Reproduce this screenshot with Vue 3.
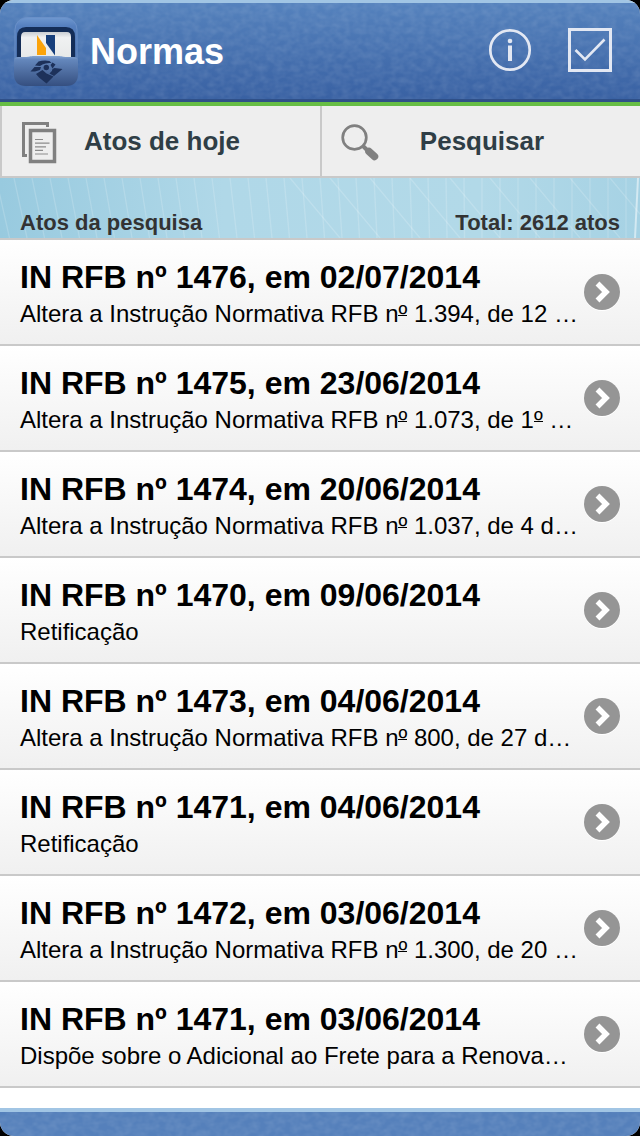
<template>
  <div class="screen">
    <div class="app">
      <header class="header">
        <svg class="texture" width="640" height="96" aria-hidden="true">
          <filter id="leather-top" x="0" y="0" width="100%" height="100%">
            <feTurbulence type="fractalNoise" baseFrequency="0.12 0.16" numOctaves="2" seed="4" />
            <feColorMatrix values="0 0 0 0 1  0 0 0 0 1  0 0 0 0 1  1 0 0 0 -0.3" />
          </filter>
          <rect width="640" height="96" filter="url(#leather-top)" />
        </svg>
        <svg class="logo" width="66" height="72" viewBox="0 0 66 72">
          <defs>
            <linearGradient id="box" x1="0" y1="0" x2="0" y2="1">
              <stop offset="0" stop-color="#6f98d0" />
              <stop offset="0.14" stop-color="#5680bf" />
              <stop offset="1" stop-color="#3f649f" />
            </linearGradient>
            <linearGradient id="front" x1="0" y1="0" x2="0" y2="1">
              <stop offset="0" stop-color="#84a4d2" />
              <stop offset="0.12" stop-color="#6487bc" />
              <stop offset="1" stop-color="#354f80" />
            </linearGradient>
            <linearGradient id="paper" x1="0" y1="0" x2="0" y2="1">
              <stop offset="0" stop-color="#c9cdd2" />
              <stop offset="0.2" stop-color="#f0f1f2" />
              <stop offset="1" stop-color="#e6e8e8" />
            </linearGradient>
          </defs>
          <rect x="2" y="1.500" width="62" height="60" rx="12" fill="url(#box)" stroke="#6a90c8" />
          <path d="M4 44V21Q4 11 13 11H53Q62 11 62 21V44Z" fill="#142d57" />
          <path d="M8 44V21Q8 16 12 16H54Q58 16 58 21V44Z" fill="url(#paper)" />
          <path d="M24 19L33 32V39H24Z" fill="#fba30b" />
          <path d="M33 19H42V39.500L33 27Z" fill="#173f7c" />
          <path d="M1 45Q1 41 5 41H13C16 41 17 40 21 40H45C49 40 50 41 53 41H61Q65 41 65 45V58Q65 70 53 70H13Q1 70 1 58Z" fill="url(#front)" />
          <g fill="#1d315a">
            <path d="M22 49.500L25.500 45.500Q31 44 36.500 45L38.500 47Q33 46.500 29.500 48.500L27 50Z" />
            <path d="M17.500 55.500L21.500 51H28L27 54L22 55.500Z" />
            <path d="M39.500 46.500L42.500 48.500L39.500 52.500L37.500 49Z" />
            <path d="M41.500 52L49.500 53L41 60L36.500 57.500Q39.500 55.500 39.500 53Z" />
            <path d="M23 58L29.500 54L33.500 57.500L40.500 60.500L33.500 67.500L26 61.500Z" />
            <circle cx="33.300" cy="51.500" r="2.700" />
          </g>
        </svg>
        <h1 class="header-title">Normas</h1>
        <div class="header-actions">
          <svg width="44" height="44" viewBox="0 0 44 44">
            <circle cx="22" cy="22" r="19.700" fill="none" stroke="#e3e8f3" stroke-width="2.700" />
            <circle cx="22" cy="13" r="2.300" fill="#e3e8f3" />
            <rect x="20" y="17.500" width="4" height="15.500" fill="#e3e8f3" />
          </svg>
          <svg width="44" height="44" viewBox="0 0 44 44">
            <rect x="1.500" y="1.500" width="41" height="41" fill="none" stroke="#e3e8f3" stroke-width="3" />
            <path d="M7.500 22L17 31.500L36.500 11.500" fill="none" stroke="#e3e8f3" stroke-width="2.600" />
          </svg>
        </div>
      </header>

      <nav class="tabs">
        <button class="tab">
          <svg class="tab-icon" width="40" height="44" viewBox="0 0 40 44">
            <g fill="none" stroke="#808080">
              <path d="M25.500 8V4.500H1.500V36.500H5" stroke-width="3" />
              <rect x="8.500" y="11.500" width="24" height="31" stroke-width="3.500" />
              <path d="M13 20.500H21M13 24.200H27.500M13 27.800H24M13 31.300H21M13 35H26" stroke-width="1.200" stroke="#8c8c8c" />
            </g>
          </svg>
          <span class="tab-label">Atos de hoje</span>
        </button>
        <button class="tab">
          <svg class="tab-icon" width="40" height="44" viewBox="0 0 40 44">
            <g fill="none" stroke="#808080">
              <circle cx="12.500" cy="18.500" r="11.800" stroke-width="2.700" />
              <path d="M21 27L26 32" stroke-width="4" />
              <path d="M27 32.500L32.500 37.500" stroke-width="7.500" stroke-linecap="round" />
            </g>
          </svg>
          <span class="tab-label">Pesquisar</span>
        </button>
      </nav>

      <div class="summary">
        <svg class="rays" width="640" height="60" aria-hidden="true">
          <path v-for="n in 37" :key="n" :d="rayPath(n)" />
          <path v-for="n in 9" :key="'d' + n" :d="diagonalPath(n)" />
          <path d="M638 0L635 60" class="bright" />
        </svg>
        <span>Atos da pesquisa</span>
        <span>Total: 2612 atos</span>
      </div>

      <ul class="list">
        <li v-for="(ato, index) in atos" :key="index" class="item">
          <div class="item-text">
            <h2>{{ ato.title }}</h2>
            <p>
              <template v-for="(part, i) in splitOrdinal(ato.summary)" :key="i">
                <span v-if="part === 'º'" class="ordinal">º</span>
                <template v-else>{{ part }}</template>
              </template>
            </p>
          </div>
          <svg class="arrow" width="36" height="36" viewBox="0 0 36 36">
            <circle cx="18" cy="18" r="18" fill="#959595" />
            <path d="M13.500 9.500L22 18L13.500 26.500" fill="none" stroke="#fff" stroke-width="5.500" />
          </svg>
        </li>
      </ul>

      <footer class="footer">
        <svg class="texture" width="640" height="24" aria-hidden="true">
          <filter id="leather-bottom" x="0" y="0" width="100%" height="100%">
            <feTurbulence type="fractalNoise" baseFrequency="0.12 0.16" numOctaves="2" seed="9" />
            <feColorMatrix values="0 0 0 0 1  0 0 0 0 1  0 0 0 0 1  1 0 0 0 -0.3" />
          </filter>
          <rect width="640" height="24" filter="url(#leather-bottom)" />
        </svg>
      </footer>
    </div>
  </div>
</template>

<script setup>
import { ref } from 'vue'

const atos = ref([
  { title: 'IN RFB nº 1476, em 02/07/2014', summary: 'Altera a Instrução Normativa RFB nº 1.394, de 12 …' },
  { title: 'IN RFB nº 1475, em 23/06/2014', summary: 'Altera a Instrução Normativa RFB nº 1.073, de 1º …' },
  { title: 'IN RFB nº 1474, em 20/06/2014', summary: 'Altera a Instrução Normativa RFB nº 1.037, de 4 d…' },
  { title: 'IN RFB nº 1470, em 09/06/2014', summary: 'Retificação' },
  { title: 'IN RFB nº 1473, em 04/06/2014', summary: 'Altera a Instrução Normativa RFB nº 800, de 27 d…' },
  { title: 'IN RFB nº 1471, em 04/06/2014', summary: 'Retificação' },
  { title: 'IN RFB nº 1472, em 03/06/2014', summary: 'Altera a Instrução Normativa RFB nº 1.300, de 20 …' },
  { title: 'IN RFB nº 1471, em 03/06/2014', summary: 'Dispõe sobre o Adicional ao Frete para a Renova…' }
])

// the ordinal sign is underlined in the summaries
function splitOrdinal(text) {
  return text.split(/(º)/)
}

// rays lean to the left edge and get straighter to the right
function rayPath(n) {
  const x = n * 18 - 22
  const lean = Math.max(0, 14 - n * 0.5)
  return `M${x} 0L${x + lean} 60`
}

function diagonalPath(n) {
  const x = 250 + n * 40
  return `M${x} 0L${x + 50} 60`
}
</script>

<style>
body {
  margin: 0;
  background: #000;
}
</style>

<style scoped>
.screen {
  width: 640px;
  height: 1136px;
  background: #000;
  font-family: "Liberation Sans", Arial, sans-serif;
}

.app {
  display: flex;
  flex-direction: column;
  height: 1136px;
  overflow: hidden;
  border-radius: 14px;
  background: #fff;
}

.header {
  position: relative;
  display: flex;
  align-items: center;
  box-sizing: border-box;
  height: 106px;
  padding: 0 28px 5px 13px;
  border-top: 3px solid #a1c5e4;
  border-bottom: 4px solid #67bd45;
  background: linear-gradient(#5582bd, #3860a2);
  box-shadow: inset 0 -3px 0 #2f5088;
}

.texture {
  position: absolute;
  top: 0;
  left: 0;
  opacity: 0.17;
}

.logo {
  position: relative;
  margin-top: 3px;
}

.header-title {
  position: relative;
  margin: 3px 0 0 11px;
  font-size: 36px;
  line-height: 42px;
  color: #fff;
}

.header-actions {
  position: relative;
  display: flex;
  gap: 36px;
  margin-left: auto;
}

.tabs {
  display: flex;
  height: 70px;
  border-bottom: 2px solid #c9c9c9;
}

.tab {
  display: flex;
  align-items: center;
  box-sizing: border-box;
  width: 50%;
  padding: 0 0 0 20px;
  border: none;
  border-left: 2px solid #c9c9c9;
  background: #eee;
  font-family: inherit;
  cursor: pointer;
}

.tab-icon {
  overflow: visible;
}

.tab-label {
  flex: 1;
  margin-right: 58px;
  font-size: 26px;
  font-weight: bold;
  color: #2f3e46;
}

.summary {
  position: relative;
  display: flex;
  justify-content: space-between;
  align-items: flex-end;
  box-sizing: border-box;
  height: 62px;
  padding: 0 20px 2px;
  border-bottom: 2px solid #c9c9c9;
  background: linear-gradient(90deg, #98cadf, #b0d8e8 35%, #b2d9e8 75%, #a6d2e4);
  font-size: 22px;
  font-weight: bold;
  line-height: 26px;
  color: #333;
}

.summary span {
  position: relative;
}

.rays {
  position: absolute;
  top: 0;
  left: 0;
}

.rays path {
  stroke: #fff;
  stroke-width: 1.3;
  opacity: 0.17;
}

.rays .bright {
  stroke-width: 2;
  opacity: 0.5;
}

.list {
  margin: 0;
  padding: 0;
  list-style: none;
}

.item {
  display: flex;
  align-items: center;
  box-sizing: border-box;
  height: 106px;
  padding: 0 20px;
  border-bottom: 2px solid #c9c9c9;
  background: linear-gradient(#fff, #f0f0f0);
}

.item-text {
  flex: 1;
  padding-top: 6px;
  white-space: nowrap;
}

.item h2 {
  margin: 0;
  font-size: 32px;
  line-height: 38px;
  color: #000;
}

.item p {
  margin: 0;
  font-size: 24px;
  line-height: 36px;
  letter-spacing: -0.01px;
  color: #000;
}

.ordinal {
  background: linear-gradient(#000, #000) 0 15px / 100% 1px no-repeat;
}

.arrow {
  filter: drop-shadow(0 1px 0 #fff);
}

.footer {
  position: relative;
  box-sizing: border-box;
  height: 28px;
  margin-top: auto;
  border-top: 4px solid #a1c5e4;
  background: #5580bb;
}
</style>
